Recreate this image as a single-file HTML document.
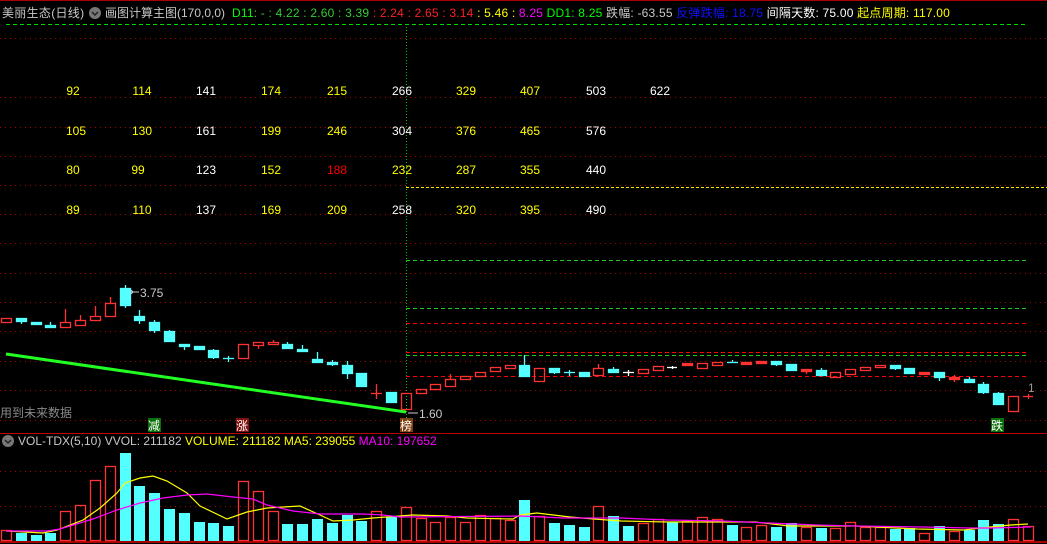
<!DOCTYPE html>
<html><head><meta charset="utf-8"><style>
html,body{margin:0;padding:0;background:#000;width:1047px;height:544px;overflow:hidden}
svg{display:block}
text{font-family:"Liberation Sans","Noto Sans CJK SC",sans-serif;font-size:12px}
</style></head><body>
<svg width="1047" height="544" viewBox="0 0 1047 544" xmlns="http://www.w3.org/2000/svg">
<line x1="0" y1="0.5" x2="1047" y2="0.5" stroke="#a00" stroke-width="1"/>
<text y="17" x="2" fill="#c8c8c8" letter-spacing="0.3">美丽生态(日线)</text>
<circle cx="95" cy="13" r="6" fill="#777"/><path d="M92 12 l3 3 l3 -3" stroke="#222" stroke-width="1.5" fill="none"/>
<text y="17" x="105" fill="#c8c8c8">画图计算主图(170,0,0)</text>
<text y="17" x="232" fill="#00ff00" letter-spacing="0.2">D11<tspan fill="#3c3">: - : 4.22 : 2.60 : 3.39</tspan><tspan fill="#ff2020"> : 2.24 : 2.65 : 3.14</tspan><tspan fill="#ffff00"> : 5.46 :</tspan><tspan fill="#ff00ff"> 8.25</tspan><tspan fill="#00ff00"> DD1: 8.25</tspan><tspan fill="#c8c8c8"> 跌幅: -63.55 </tspan><tspan fill="#1010ff">反弹跌幅: 18.75 </tspan><tspan fill="#fff">间隔天数: 75.00 </tspan><tspan fill="#ffff00">起点周期: 117.00</tspan></text>
<line x1="6" y1="24.5" x2="1027" y2="24.5" stroke="#0d0" stroke-dasharray="4 3"/>
<g stroke="#a00" stroke-dasharray="1 4">
<line x1="0" x2="1047" y1="38.5" y2="38.5"/><line x1="0" x2="1047" y1="97.5" y2="97.5"/><line x1="0" x2="1047" y1="127.5" y2="127.5"/>
<line x1="0" x2="1047" y1="156.5" y2="156.5"/><line x1="0" x2="1047" y1="185.5" y2="185.5"/><line x1="0" x2="1047" y1="214.5" y2="214.5"/>
<line x1="0" x2="1047" y1="243.5" y2="243.5"/><line x1="0" x2="1047" y1="273.5" y2="273.5"/><line x1="0" x2="1047" y1="302.5" y2="302.5"/>
<line x1="0" x2="1047" y1="331.5" y2="331.5"/><line x1="0" x2="1047" y1="361.5" y2="361.5"/><line x1="0" x2="1047" y1="390.5" y2="390.5"/>
<line x1="0" x2="1047" y1="420.5" y2="420.5"/>
<line x1="0" x2="1047" y1="471.5" y2="471.5"/><line x1="0" x2="1047" y1="506.5" y2="506.5"/>
</g>
<line x1="406.5" y1="24" x2="406.5" y2="420" stroke="#0c0" stroke-dasharray="1 2"/>
<line x1="406" y1="187.5" x2="1047" y2="187.5" stroke="#ee0" stroke-dasharray="3 2"/>
<g stroke-dasharray="4 3">
<line x1="406" x2="1027" y1="260.5" y2="260.5" stroke="#2c2"/>
<line x1="406" x2="1027" y1="308.5" y2="308.5" stroke="#2c2"/>
<line x1="406" x2="1027" y1="323.5" y2="323.5" stroke="#e00"/>
<line x1="406" x2="1027" y1="352.5" y2="352.5" stroke="#f00"/>
<line x1="406" x2="1027" y1="355.5" y2="355.5" stroke="#2c2"/>
<line x1="406" x2="1027" y1="376.5" y2="376.5" stroke="#f00"/>
</g>
<g text-anchor="middle">
<text y="95" x="73" fill="#ff0">92</text><text y="95" x="142" fill="#ff0">114</text><text y="95" x="206" fill="#fff">141</text><text y="95" x="271" fill="#ff0">174</text><text y="95" x="337" fill="#ff0">215</text><text y="95" x="402" fill="#fff">266</text><text y="95" x="466" fill="#ff0">329</text><text y="95" x="530" fill="#ff0">407</text><text y="95" x="596" fill="#fff">503</text><text y="95" x="660" fill="#fff">622</text>
<text y="135" x="76" fill="#ff0">105</text><text y="135" x="142" fill="#ff0">130</text><text y="135" x="206" fill="#fff">161</text><text y="135" x="271" fill="#ff0">199</text><text y="135" x="337" fill="#ff0">246</text><text y="135" x="402" fill="#fff">304</text><text y="135" x="466" fill="#ff0">376</text><text y="135" x="530" fill="#ff0">465</text><text y="135" x="596" fill="#fff">576</text>
<text y="174" x="73" fill="#ff0">80</text><text y="174" x="138" fill="#ff0">99</text><text y="174" x="206" fill="#fff">123</text><text y="174" x="271" fill="#ff0">152</text><text y="174" x="337" fill="#f00">188</text><text y="174" x="402" fill="#ff0">232</text><text y="174" x="466" fill="#ff0">287</text><text y="174" x="530" fill="#ff0">355</text><text y="174" x="596" fill="#fff">440</text>
<text y="214" x="73" fill="#ff0">89</text><text y="214" x="142" fill="#ff0">110</text><text y="214" x="206" fill="#fff">137</text><text y="214" x="271" fill="#ff0">169</text><text y="214" x="337" fill="#ff0">209</text><text y="214" x="402" fill="#fff">258</text><text y="214" x="466" fill="#ff0">320</text><text y="214" x="530" fill="#ff0">395</text><text y="214" x="596" fill="#fff">490</text>
</g>
<line x1="6" y1="354" x2="406" y2="412" stroke="#2f2" stroke-width="3"/>
<g stroke-width="1.3">
<g stroke="#ff3232" fill="none">
<rect x="1.5" y="318.5" width="10" height="4"/>
<line x1="65.5" y1="309" x2="65.5" y2="322"/><rect x="60.5" y="322.5" width="10" height="5"/>
<line x1="80.5" y1="315" x2="80.5" y2="320"/><rect x="75.5" y="320.5" width="10" height="5"/>
<line x1="95.5" y1="306" x2="95.5" y2="316"/><rect x="90.5" y="316.5" width="10" height="4"/>
<line x1="110.5" y1="297" x2="110.5" y2="303"/><rect x="105.5" y="303.5" width="10" height="13"/>
<rect x="238.5" y="344.5" width="10" height="14"/>
<line x1="258.5" y1="345" x2="258.5" y2="349"/><rect x="253.5" y="342.5" width="10" height="3"/>
<line x1="273.5" y1="340" x2="273.5" y2="342"/><rect x="268.5" y="342.5" width="10" height="2"/>
<line x1="376.5" y1="384" x2="376.5" y2="399"/><line x1="371" y1="393.5" x2="382" y2="393.5"/>
<rect x="401.5" y="393.5" width="10" height="16"/>
<rect x="416.5" y="389.5" width="10" height="4"/><rect x="430.5" y="384.5" width="10" height="5"/>
<line x1="450.5" y1="374" x2="450.5" y2="379"/><rect x="445.5" y="379.5" width="10" height="7"/>
<rect x="460.5" y="376.5" width="10" height="3"/><rect x="475.5" y="372.5" width="10" height="4"/><rect x="490.5" y="367.5" width="10" height="4"/>
<rect x="505.5" y="365.5" width="10" height="3"/><rect x="534.5" y="368.5" width="10" height="13"/>
<line x1="598.5" y1="364" x2="598.5" y2="368"/><rect x="593.5" y="368.5" width="10" height="7"/>
<rect x="638.5" y="369.5" width="10" height="4"/><rect x="653.5" y="366.5" width="10" height="4"/>
<rect x="697.5" y="363.5" width="10" height="5"/><rect x="712.5" y="362.5" width="10" height="3"/>
<rect x="830.5" y="372.5" width="10" height="5"/><rect x="845.5" y="369.5" width="10" height="5"/><rect x="860.5" y="367.5" width="10" height="3"/><rect x="875.5" y="365.5" width="10" height="2"/>
<rect x="1008.5" y="396.5" width="10" height="15"/>
<line x1="1023" y1="396.5" x2="1033" y2="396.5"/><line x1="1028.5" y1="394" x2="1028.5" y2="399"/>
</g>
<g fill="#ff3232" stroke="#ff3232">
<rect x="682.5" y="363.5" width="10" height="2"/><rect x="741.5" y="362.5" width="10" height="2"/><rect x="756.5" y="361.5" width="10" height="2"/>
<rect x="801.5" y="369.5" width="10" height="2"/><line x1="806.5" y1="371" x2="806.5" y2="374"/>
<rect x="919.5" y="372.5" width="10" height="2"/><rect x="949.5" y="377.5" width="10" height="2"/><line x1="954.5" y1="375" x2="954.5" y2="382"/>
</g>
<g fill="#54ffff" stroke="#54ffff">
<rect x="16.5" y="318.5" width="10" height="3"/><line x1="21.5" y1="321" x2="21.5" y2="324"/>
<rect x="31.5" y="322.5" width="10" height="2"/>
<rect x="45.5" y="325.5" width="10" height="2"/><line x1="50.5" y1="322" x2="50.5" y2="325"/>
<line x1="125.5" y1="285" x2="125.5" y2="308"/><rect x="120.5" y="288.5" width="10" height="17"/>
<line x1="139.5" y1="310" x2="139.5" y2="324"/><rect x="134.5" y="316.5" width="10" height="4"/>
<line x1="154.5" y1="320" x2="154.5" y2="333"/><rect x="149.5" y="322.5" width="10" height="8"/>
<line x1="169.5" y1="330" x2="169.5" y2="342"/><rect x="164.5" y="331.5" width="10" height="10"/>
<line x1="184.5" y1="346" x2="184.5" y2="350"/><rect x="179.5" y="344.5" width="10" height="2"/>
<rect x="194.5" y="346.5" width="10" height="3"/>
<line x1="213.5" y1="349" x2="213.5" y2="359"/><rect x="208.5" y="350.5" width="10" height="7"/>
<line x1="228.5" y1="356" x2="228.5" y2="362"/><line x1="223" y1="358.5" x2="234" y2="358.5"/>
<line x1="287.5" y1="342" x2="287.5" y2="344"/><rect x="282.5" y="344.5" width="10" height="4"/>
<line x1="302.5" y1="345" x2="302.5" y2="349"/><rect x="297.5" y="349.5" width="10" height="2"/>
<line x1="317.5" y1="352" x2="317.5" y2="362"/><rect x="312.5" y="359.5" width="10" height="3"/>
<line x1="332.5" y1="360" x2="332.5" y2="366"/><rect x="327.5" y="362.5" width="10" height="2"/>
<line x1="347.5" y1="361" x2="347.5" y2="379"/><rect x="342.5" y="365.5" width="10" height="8"/>
<rect x="356.5" y="373.5" width="10" height="13"/>
<rect x="386.5" y="392.5" width="10" height="10"/>
<line x1="524.5" y1="355" x2="524.5" y2="376"/><rect x="519.5" y="365.5" width="10" height="11"/>
<line x1="554.5" y1="372" x2="554.5" y2="374"/><rect x="549.5" y="368.5" width="10" height="4"/>
<line x1="569.5" y1="370" x2="569.5" y2="376"/><line x1="564" y1="372.5" x2="575" y2="372.5"/>
<rect x="579.5" y="372.5" width="10" height="4"/>
<line x1="613.5" y1="367" x2="613.5" y2="372"/><rect x="608.5" y="369.5" width="10" height="3"/>
<line x1="727" y1="362.5" x2="738" y2="362.5"/><line x1="732.5" y1="360" x2="732.5" y2="363"/>
<line x1="776.5" y1="364" x2="776.5" y2="366"/><rect x="771.5" y="361.5" width="10" height="3"/>
<rect x="786.5" y="364.5" width="10" height="6"/>
<line x1="821.5" y1="368" x2="821.5" y2="370"/><rect x="816.5" y="370.5" width="10" height="5"/>
<line x1="895.5" y1="368" x2="895.5" y2="370"/><rect x="890.5" y="365.5" width="10" height="3"/>
<line x1="909.5" y1="370" x2="909.5" y2="374"/><rect x="904.5" y="368.5" width="10" height="5"/>
<line x1="939.5" y1="376" x2="939.5" y2="381"/><rect x="934.5" y="372.5" width="10" height="5"/>
<line x1="969.5" y1="377" x2="969.5" y2="380"/><rect x="964.5" y="379.5" width="10" height="3"/>
<line x1="983.5" y1="382" x2="983.5" y2="394"/><rect x="978.5" y="384.5" width="10" height="8"/>
<line x1="998.5" y1="392" x2="998.5" y2="394"/><rect x="993.5" y="393.5" width="10" height="11"/>
</g>
<g stroke="#fff">
<line x1="623" y1="372.5" x2="634" y2="372.5"/><line x1="628.5" y1="370" x2="628.5" y2="376"/>
<line x1="667" y1="367.5" x2="677" y2="367.5"/><line x1="672.5" y1="366" x2="672.5" y2="369"/>
</g>
</g>
<text x="1028" y="392" fill="#999" font-size="11">1</text>
<path d="M131 292 h8" stroke="#ccc"/><path d="M131 290 l2 2 l-2 2" stroke="#ccc" fill="none"/>
<text x="140" y="297" fill="#c8c8c8">3.75</text>
<path d="M408 413 h10" stroke="#ccc"/>
<text x="419" y="418" fill="#c8c8c8">1.60</text>
<text x="0" y="417" fill="#888">用到未来数据</text>
<rect x="148" y="418" width="13" height="14" fill="#0a700a"/><text x="148" y="430" fill="#fff">减</text>
<rect x="236" y="418" width="13" height="14" fill="#801010"/><text x="236" y="430" fill="#fff">涨</text>
<rect x="400" y="418" width="13" height="14" fill="#804010"/><text x="400" y="430" fill="#fff">榜</text>
<rect x="991" y="418" width="13" height="14" fill="#0a700a"/><text x="991" y="430" fill="#fff">跌</text>
<line x1="0" y1="433.5" x2="1047" y2="433.5" stroke="#b00"/>
<circle cx="8" cy="441" r="6" fill="#777"/><path d="M5 440 l3 3 l3 -3" stroke="#222" stroke-width="1.5" fill="none"/>
<text x="18" y="445" fill="#c8c8c8">VOL-TDX(5,10)  VVOL: 211182 <tspan fill="#ff0">VOLUME: 211182  MA5: 239055 </tspan><tspan fill="#f0f"> MA10: 197652</tspan></text>
<line x1="0" y1="542" x2="1047" y2="542" stroke="#d00" stroke-width="1.5"/>
<g stroke="#ff3232" stroke-width="1.3" fill="none">
<rect x="1.5" y="530.5" width="10" height="10"/><rect x="60.5" y="511.5" width="10" height="29"/><rect x="75.5" y="505.5" width="10" height="35"/><rect x="90.5" y="480.5" width="10" height="60"/><rect x="105.5" y="466.5" width="10" height="74"/>
<rect x="238.5" y="481.5" width="10" height="59"/><rect x="253.5" y="491.5" width="10" height="49"/><rect x="268.5" y="511.5" width="10" height="29"/>
<rect x="371.5" y="511.5" width="10" height="29"/><rect x="401.5" y="507.5" width="10" height="33"/><rect x="416.5" y="518.5" width="10" height="22"/><rect x="430.5" y="522.5" width="10" height="18"/><rect x="445.5" y="517.5" width="10" height="23"/><rect x="460.5" y="522.5" width="10" height="18"/><rect x="475.5" y="515.5" width="10" height="25"/><rect x="490.5" y="518.5" width="10" height="22"/><rect x="505.5" y="520.5" width="10" height="20"/>
<rect x="534.5" y="516.5" width="10" height="24"/><rect x="593.5" y="506.5" width="10" height="34"/><rect x="638.5" y="523.5" width="10" height="17"/><rect x="653.5" y="519.5" width="10" height="21"/><rect x="682.5" y="521.5" width="10" height="19"/><rect x="697.5" y="517.5" width="10" height="23"/><rect x="712.5" y="519.5" width="10" height="21"/>
<rect x="741.5" y="527.5" width="10" height="13"/><rect x="756.5" y="525.5" width="10" height="15"/><rect x="801.5" y="527.5" width="10" height="13"/><rect x="830.5" y="528.5" width="10" height="12"/><rect x="845.5" y="522.5" width="10" height="18"/><rect x="860.5" y="527.5" width="10" height="13"/><rect x="875.5" y="527.5" width="10" height="13"/><rect x="919.5" y="533.5" width="10" height="7"/><rect x="949.5" y="531.5" width="10" height="9"/><rect x="1008.5" y="519.5" width="10" height="21"/><rect x="1023.5" y="526.5" width="10" height="14"/>
</g>
<g fill="#54ffff">
<rect x="16" y="533" width="11" height="8"/><rect x="31" y="535" width="11" height="6"/><rect x="45" y="533" width="11" height="8"/><rect x="120" y="453" width="11" height="88"/><rect x="134" y="486" width="11" height="55"/><rect x="149" y="493" width="11" height="48"/><rect x="164" y="509" width="11" height="32"/><rect x="179" y="513" width="11" height="28"/><rect x="194" y="522" width="11" height="19"/><rect x="208" y="523" width="11" height="18"/><rect x="223" y="526" width="11" height="15"/>
<rect x="282" y="524" width="11" height="17"/><rect x="297" y="524" width="11" height="17"/><rect x="312" y="519" width="11" height="22"/><rect x="327" y="523" width="11" height="18"/><rect x="342" y="515" width="11" height="26"/><rect x="356" y="521" width="11" height="20"/><rect x="386" y="517" width="11" height="24"/>
<rect x="519" y="500" width="11" height="41"/><rect x="549" y="523" width="11" height="18"/><rect x="564" y="525" width="11" height="16"/><rect x="579" y="527" width="11" height="14"/><rect x="608" y="516" width="11" height="25"/><rect x="623" y="526" width="11" height="15"/><rect x="667" y="522" width="11" height="19"/><rect x="727" y="525" width="11" height="16"/><rect x="771" y="527" width="11" height="14"/><rect x="786" y="523" width="11" height="18"/><rect x="816" y="528" width="11" height="13"/><rect x="890" y="529" width="11" height="12"/><rect x="904" y="528" width="11" height="13"/><rect x="934" y="526" width="11" height="15"/><rect x="964" y="530" width="11" height="11"/><rect x="978" y="520" width="11" height="21"/><rect x="993" y="524" width="11" height="17"/>
</g>
<polyline fill="none" stroke="#ff0" stroke-width="1.2" points="6,531 43,533 57,530 83,520 100,508 117,493 125,483 140,478 153,476 167,481 187,493 200,506 227,519 247,512 267,508 300,506 320,515 333,521 353,520 373,518 400,516 413,515 447,516 467,518 513,519 520,515 537,513 570,517 594,519 621,521 668,522 695,522 755,522 789,526 856,526 917,529 964,530 990,527 1011,525 1028,524"/>
<polyline fill="none" stroke="#f0f" stroke-width="1.2" points="6,531 47,531 60,529 93,519 117,510 140,503 163,498 187,495 207,494 233,497 253,499 267,505 293,511 320,514 363,514 383,515 400,517 520,516 564,518 621,518 668,520 722,521 769,523 816,525 856,526 923,527 970,528 990,528 1031,527"/>
</svg>
</body></html>
